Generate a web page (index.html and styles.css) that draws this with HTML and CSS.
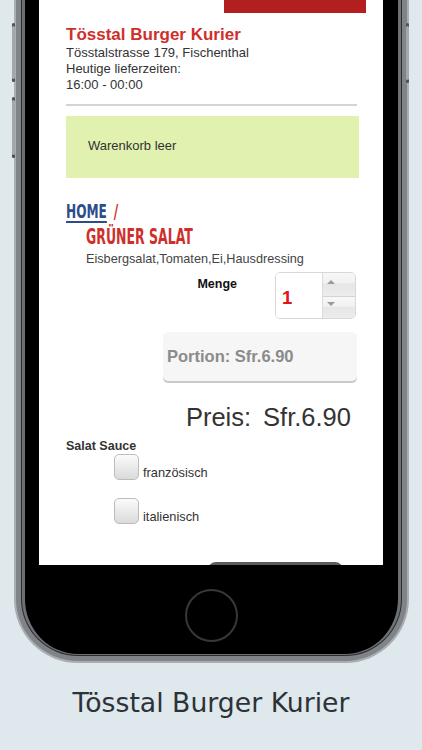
FILE: index.html
```html
<!DOCTYPE html>
<html lang="de">
<head>
<meta charset="utf-8">
<title>Tösstal Burger Kurier</title>
<link rel="stylesheet" href="styles.css">
</head>
<body>
<div class="stage">
  <div class="phone">
    <span class="side-btn btn-l1"></span>
    <span class="side-btn btn-l2"></span>
    <span class="side-btn btn-r1"></span>
    <div class="bezel">
      <div class="screen">
        <div class="topbar"></div>
        <div class="content">
          <h1 class="title">Tösstal Burger Kurier</h1>
          <p class="addr">Tösstalstrasse 179, Fischenthal<br>Heutige lieferzeiten:<br>16:00 - 00:00</p>
          <div class="rule"></div>
          <div class="cart">Warenkorb leer</div>
          <div class="crumb"><a class="crumb-home">HOME</a> <span class="crumb-sep">/</span></div>
          <h2 class="product">GRÜNER SALAT</h2>
          <p class="desc">Eisbergsalat,Tomaten,Ei,Hausdressing</p>
          <div class="qty-row">
            <span class="qty-label">Menge</span>
            <div class="qty">
              <span class="qty-val">1</span>
              <span class="qty-spin">
                <span class="spin-up"><i class="arr-up"></i></span>
                <span class="spin-down"><i class="arr-down"></i></span>
              </span>
            </div>
          </div>
          <div class="portion">Portion: Sfr.6.90</div>
          <div class="price"><span>Preis:</span><span>Sfr.6.90</span></div>
          <div class="sauce-title">Salat Sauce</div>
          <label class="opt"><span class="box"></span><span class="opt-text">französisch</span></label>
          <label class="opt opt-2"><span class="box"></span><span class="opt-text">italienisch</span></label>
          <div class="peek"></div>
        </div>
      </div>
      <div class="home"></div>
    </div>
  </div>
  <p class="caption">Tösstal Burger Kurier</p>
</div>
</body>
</html>
```
FILE: styles.css
```css
html, body {
  margin: 0;
  padding: 0;
}
body {
  background: #dfe8ed;
  font-family: "Liberation Sans", Arial, sans-serif;
  overflow: hidden;
}
.stage {
  width: 422px;
  height: 750px;
}
.phone {
  position: relative;
  padding-left: 22px;
}
.side-btn {
  position: absolute;
  width: 3px;
  background: #a4a7ab;
  border-radius: 1.5px;
  box-shadow: inset 0 3px 0 #505155, inset 0 -3px 0 #505155;
}
.btn-l1 { left: 12px; top: 23px; height: 59px; }
.btn-l2 { left: 12px; top: 97px; height: 61px; }
.btn-r1 { left: 406px; top: 23px; height: 60px; }

.bezel {
  box-sizing: border-box;
  width: 379px;
  background: #000;
  border: 3px solid #6d7074;
  border-top: 0;
  border-bottom-width: 1px;
  border-radius: 0 0 56px 56px;
  box-shadow: 0 0 0 1px #2b2c2f, 0 0 0 6px #808388, 0 0 0 8px #aaaeb2;
  padding: 0 15px 12px 14px;
}
.screen {
  box-sizing: border-box;
  width: 344px;
  height: 565px;
  background: #fff;
  overflow: hidden;
  padding: 0 17px 0 27px;
}
.topbar {
  width: 142px;
  height: 13px;
  margin-left: auto;
  background: #b31e1f;
}
.content {
  margin-right: 7px;
}
.title {
  margin: 12px 0 0;
  font-size: 17px;
  line-height: 20px;
  font-weight: bold;
  color: #cf2f2b;
}
.addr {
  margin: 0;
  font-size: 13px;
  line-height: 16px;
  color: #333;
}
.rule {
  height: 2px;
  margin: 11px 2px 0 0;
  background: #d4d4d8;
}
.cart {
  margin-top: 10px;
  padding: 22px 22px 24px;
  background: #e1f1af;
  font-size: 13px;
  line-height: 16px;
  color: #333;
}
.crumb,
.product {
  font-family: "Liberation Sans Narrow", "DejaVu Sans Condensed", "Liberation Sans", sans-serif;
  font-weight: bold;
  transform-origin: left center;
}
.crumb {
  margin-top: 22px;
  font-size: 20px;
  line-height: 22px;
  transform: scaleX(0.675);
}
.crumb-home {
  color: #2c4c8c;
  text-decoration: underline;
  text-decoration-thickness: 2px;
  text-underline-offset: 3px;
}
.crumb-sep {
  margin-left: 4px;
  color: #cf2f2b;
}
.product {
  margin: 4px 0 0 20px;
  font-size: 21px;
  line-height: 22px;
  color: #cf2f2b;
  transform: scaleX(0.662);
}
.desc {
  margin: 4px 0 0 20px;
  font-size: 12.7px;
  line-height: 15px;
  color: #444;
}
.qty-row {
  display: flex;
  justify-content: flex-end;
  gap: 38px;
  margin: 5px 3px 0 0;
}
.qty-label {
  margin-top: 5px;
  font-size: 12.5px;
  line-height: 15px;
  font-weight: bold;
  color: #111;
}
.qty {
  box-sizing: border-box;
  display: flex;
  width: 81px;
  height: 47px;
  border: 1px solid #d8d8d8;
  border-radius: 5px;
  overflow: hidden;
}
.qty-val {
  width: 46px;
  padding: 4px 0 0 6px;
  box-sizing: border-box;
  display: flex;
  align-items: center;
  background: #fff;
  color: #e0141c;
  font-size: 18.5px;
  font-weight: bold;
}
.qty-spin {
  flex: 1;
  display: flex;
  flex-direction: column;
  border-left: 1px solid #dcdcdc;
}
.qty-spin > span {
  flex: 1;
  display: flex;
  padding-left: 4px;
  background: linear-gradient(#f7f7f7 0%, #f1f1f1 45%, #e6e6e6 46%, #ececec 100%);
}
.spin-up {
  align-items: flex-start;
  padding-top: 7px;
  border-bottom: 1px solid #d3d3d3;
}
.spin-down {
  align-items: flex-start;
  padding-top: 5px;
}
.arr-up {
  width: 0;
  height: 0;
  border-left: 4px solid transparent;
  border-right: 4px solid transparent;
  border-bottom: 4px solid #9a9a9a;
}
.arr-down {
  width: 0;
  height: 0;
  border-left: 4px solid transparent;
  border-right: 4px solid transparent;
  border-top: 4px solid #9a9a9a;
}
.portion {
  box-sizing: border-box;
  width: 194px;
  height: 49px;
  margin: 13px 2px 0 auto;
  padding-left: 4px;
  background: #f6f6f6;
  border-radius: 5px;
  box-shadow: 0 2px 0 #c9c9c9;
  font-size: 16.5px;
  line-height: 49px;
  font-weight: bold;
  color: #8b8b8b;
}
.price {
  display: flex;
  justify-content: flex-end;
  gap: 12px;
  margin: 22px 8px 0 0;
  font-size: 25.5px;
  line-height: 29px;
  color: #333;
}
.sauce-title {
  margin-top: 7px;
  font-size: 12.5px;
  line-height: 15px;
  font-weight: bold;
  color: #333;
}
.opt {
  display: flex;
  align-items: flex-end;
  gap: 4px;
  margin: 0 0 0 48px;
}
.opt-2 {
  margin-top: 18px;
}
.box {
  box-sizing: border-box;
  width: 25px;
  height: 26px;
  border: 1px solid #bcbcbc;
  border-radius: 5px;
  background: linear-gradient(#fbfbfb, #dadada);
}
.opt-text {
  font-size: 12.8px;
  line-height: 15px;
  color: #333;
}
.peek {
  width: 135px;
  height: 20px;
  margin: 38px 0 0 142px;
  background: #5b5b5b;
  border-radius: 8px 8px 0 0;
}
.home {
  box-sizing: border-box;
  width: 53px;
  height: 53px;
  margin: 24px auto 0;
  border: 2px solid #38383b;
  border-radius: 50%;
}
.caption {
  margin: 32px 0 0;
  text-align: center;
  font-family: "DejaVu Sans", Verdana, sans-serif;
  font-size: 26.7px;
  line-height: 31px;
  color: #2c3236;
}
```
